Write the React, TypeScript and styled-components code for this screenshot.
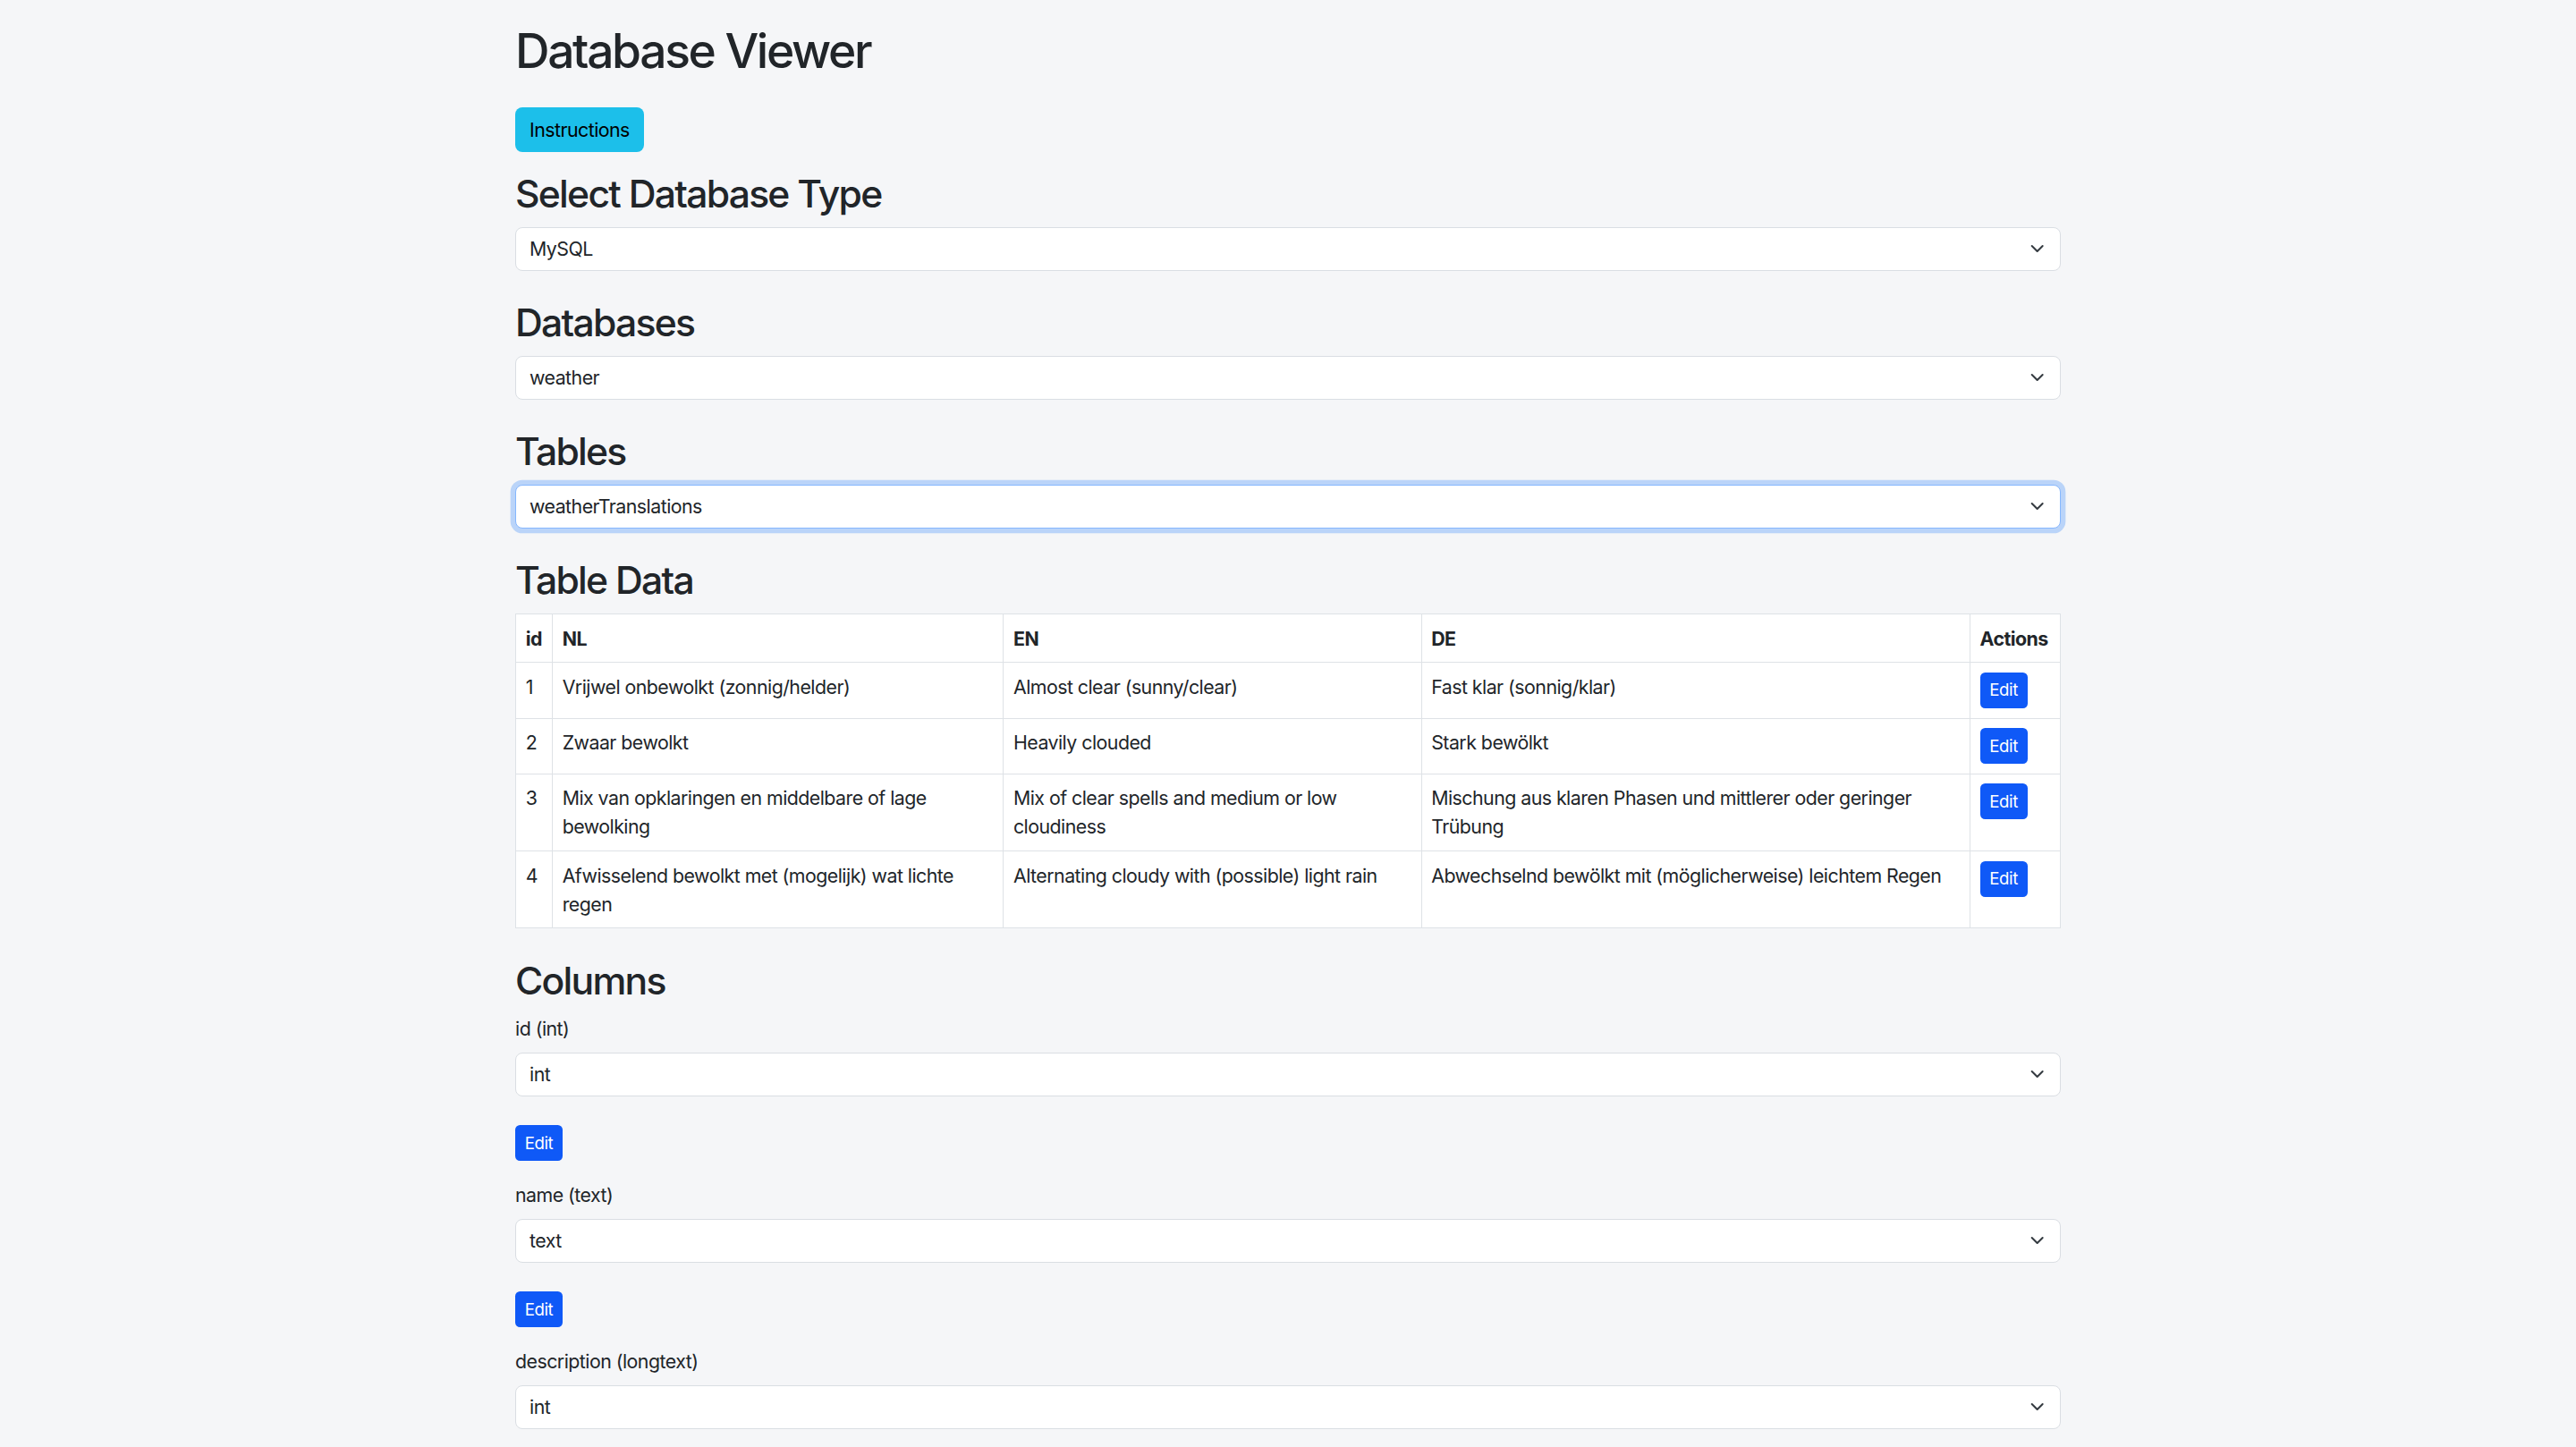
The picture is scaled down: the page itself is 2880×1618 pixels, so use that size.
import React from "react";
import styled, { createGlobalStyle } from "styled-components";

const GlobalStyle = createGlobalStyle`
  html, body {
    margin: 0;
    padding: 0;
  }
  body {
    background: #f5f6f8;
    color: #212529;
    font-family: Inter, "Noto Sans", "Liberation Sans", sans-serif;
    font-size: 21.33px;
    line-height: 1.5;
    letter-spacing: -0.53px;
  }
  * {
    box-sizing: border-box;
  }
`;

const Page = styled.main`
  max-width: 1760px;
  margin: 0 auto;
  padding: 25px 16px 40px;
`;

const Title = styled.h1`
  margin: 0 0 31px;
  font-size: 53.33px;
  line-height: 64px;
  font-weight: 500;
  letter-spacing: -0.044em;
`;

const InfoButton = styled.button`
  display: block;
  height: 50px;
  margin-bottom: 21px;
  padding: 0 16px;
  border: none;
  border-radius: 8px;
  background: #1cbfea;
  color: #000;
  font-family: inherit;
  font-size: 21.33px;
  letter-spacing: inherit;
  cursor: pointer;
`;

const SectionTitle = styled.h2`
  margin: 0 0 11.4px;
  font-size: 42.67px;
  line-height: 51.2px;
  font-weight: 500;
  letter-spacing: -0.041em;
`;

const SelectWrap = styled.div<{ $gap?: number }>`
  position: relative;
  margin-bottom: ${(p) => p.$gap ?? 32.5}px;
`;

const Select = styled.select<{ $focused?: boolean }>`
  display: block;
  width: 100%;
  height: 49px;
  padding: 0 48px 0 15px;
  border: 1px solid ${(p) => (p.$focused ? "#86b7fe" : "#dadee3")};
  border-radius: 8px;
  background: #fff;
  color: #212529;
  font-family: inherit;
  font-size: 21.33px;
  letter-spacing: inherit;
  appearance: none;
  outline: none;
  box-shadow: ${(p) => (p.$focused ? "0 0 0 5.33px rgba(13, 110, 253, 0.25)" : "none")};
`;

const Chevron = styled.svg`
  position: absolute;
  right: 16px;
  top: 50%;
  width: 21.33px;
  height: 16px;
  transform: translateY(-50%);
  pointer-events: none;
`;

const DataTable = styled.table`
  width: 100%;
  margin-bottom: 32.5px;
  border-collapse: collapse;
  table-layout: fixed;
  background: #fff;

  th,
  td {
    padding: 10.67px;
    border: 1px solid #dee2e6;
    text-align: left;
    vertical-align: top;
    line-height: 32px;
  }
  th {
    font-weight: 700;
  }
`;

const EditButton = styled.button`
  display: block;
  height: 40px;
  padding: 0 10.67px;
  border: none;
  border-radius: 5.33px;
  background: #0f59f7;
  color: #fff;
  font-family: inherit;
  font-size: 18.67px;
  letter-spacing: -0.4px;
  cursor: pointer;
`;

const ColumnGroup = styled.div`
  margin-bottom: 21.5px;
`;

const FieldLabel = styled.label`
  display: block;
  margin-bottom: 11px;
  line-height: 32px;
`;

type Row = { id: number; nl: string; en: string; de: string };

const rows: Row[] = [
  {
    id: 1,
    nl: "Vrijwel onbewolkt (zonnig/helder)",
    en: "Almost clear (sunny/clear)",
    de: "Fast klar (sonnig/klar)",
  },
  { id: 2, nl: "Zwaar bewolkt", en: "Heavily clouded", de: "Stark bewölkt" },
  {
    id: 3,
    nl: "Mix van opklaringen en middelbare of lage bewolking",
    en: "Mix of clear spells and medium or low cloudiness",
    de: "Mischung aus klaren Phasen und mittlerer oder geringer Trübung",
  },
  {
    id: 4,
    nl: "Afwisselend bewolkt met (mogelijk) wat lichte regen",
    en: "Alternating cloudy with (possible) light rain",
    de: "Abwechselnd bewölkt mit (möglicherweise) leichtem Regen",
  },
];

const columns = [
  { name: "id", type: "int", value: "int" },
  { name: "name", type: "text", value: "text" },
  { name: "description", type: "longtext", value: "int" },
];

const typeOptions = ["int", "text", "longtext", "varchar", "date"];

const Dropdown = ({
  value,
  options,
  focused,
  gap,
  id,
}: {
  value: string;
  options: string[];
  focused?: boolean;
  gap?: number;
  id?: string;
}) => (
  <SelectWrap $gap={gap}>
    <Select id={id} defaultValue={value} $focused={focused}>
      {options.map((o) => (
        <option key={o} value={o}>
          {o}
        </option>
      ))}
    </Select>
    <Chevron viewBox="0 0 16 16" preserveAspectRatio="xMidYMid meet">
      <path
        d="m2 5 6 6 6-6"
        fill="none"
        stroke="#343a40"
        strokeWidth="2"
        strokeLinecap="round"
        strokeLinejoin="round"
      />
    </Chevron>
  </SelectWrap>
);

export default function App() {
  return (
    <>
      <GlobalStyle />
      <Page>
        <Title>Database Viewer</Title>
        <InfoButton>Instructions</InfoButton>

        <SectionTitle>Select Database Type</SectionTitle>
        <Dropdown value="MySQL" options={["MySQL", "PostgreSQL", "SQLite"]} />

        <SectionTitle>Databases</SectionTitle>
        <Dropdown value="weather" options={["weather", "shop", "users"]} />

        <SectionTitle>Tables</SectionTitle>
        <Dropdown
          value="weatherTranslations"
          options={["weather", "weatherTranslations", "stations"]}
          focused
        />

        <SectionTitle>Table Data</SectionTitle>
        <DataTable>
          <colgroup>
            <col style={{ width: 41 }} />
            <col style={{ width: 504 }} />
            <col style={{ width: 467 }} />
            <col style={{ width: 613 }} />
            <col style={{ width: 101 }} />
          </colgroup>
          <thead>
            <tr>
              <th>id</th>
              <th>NL</th>
              <th>EN</th>
              <th>DE</th>
              <th>Actions</th>
            </tr>
          </thead>
          <tbody>
            {rows.map((r) => (
              <tr key={r.id}>
                <td>{r.id}</td>
                <td>{r.nl}</td>
                <td>{r.en}</td>
                <td>{r.de}</td>
                <td>
                  <EditButton>Edit</EditButton>
                </td>
              </tr>
            ))}
          </tbody>
        </DataTable>

        <SectionTitle>Columns</SectionTitle>
        {columns.map((c) => (
          <ColumnGroup key={c.name}>
            <FieldLabel htmlFor={`col-${c.name}`}>
              {c.name} ({c.type})
            </FieldLabel>
            <Dropdown id={`col-${c.name}`} value={c.value} options={typeOptions} gap={32.5} />
            <EditButton>Edit</EditButton>
          </ColumnGroup>
        ))}
      </Page>
    </>
  );
}
